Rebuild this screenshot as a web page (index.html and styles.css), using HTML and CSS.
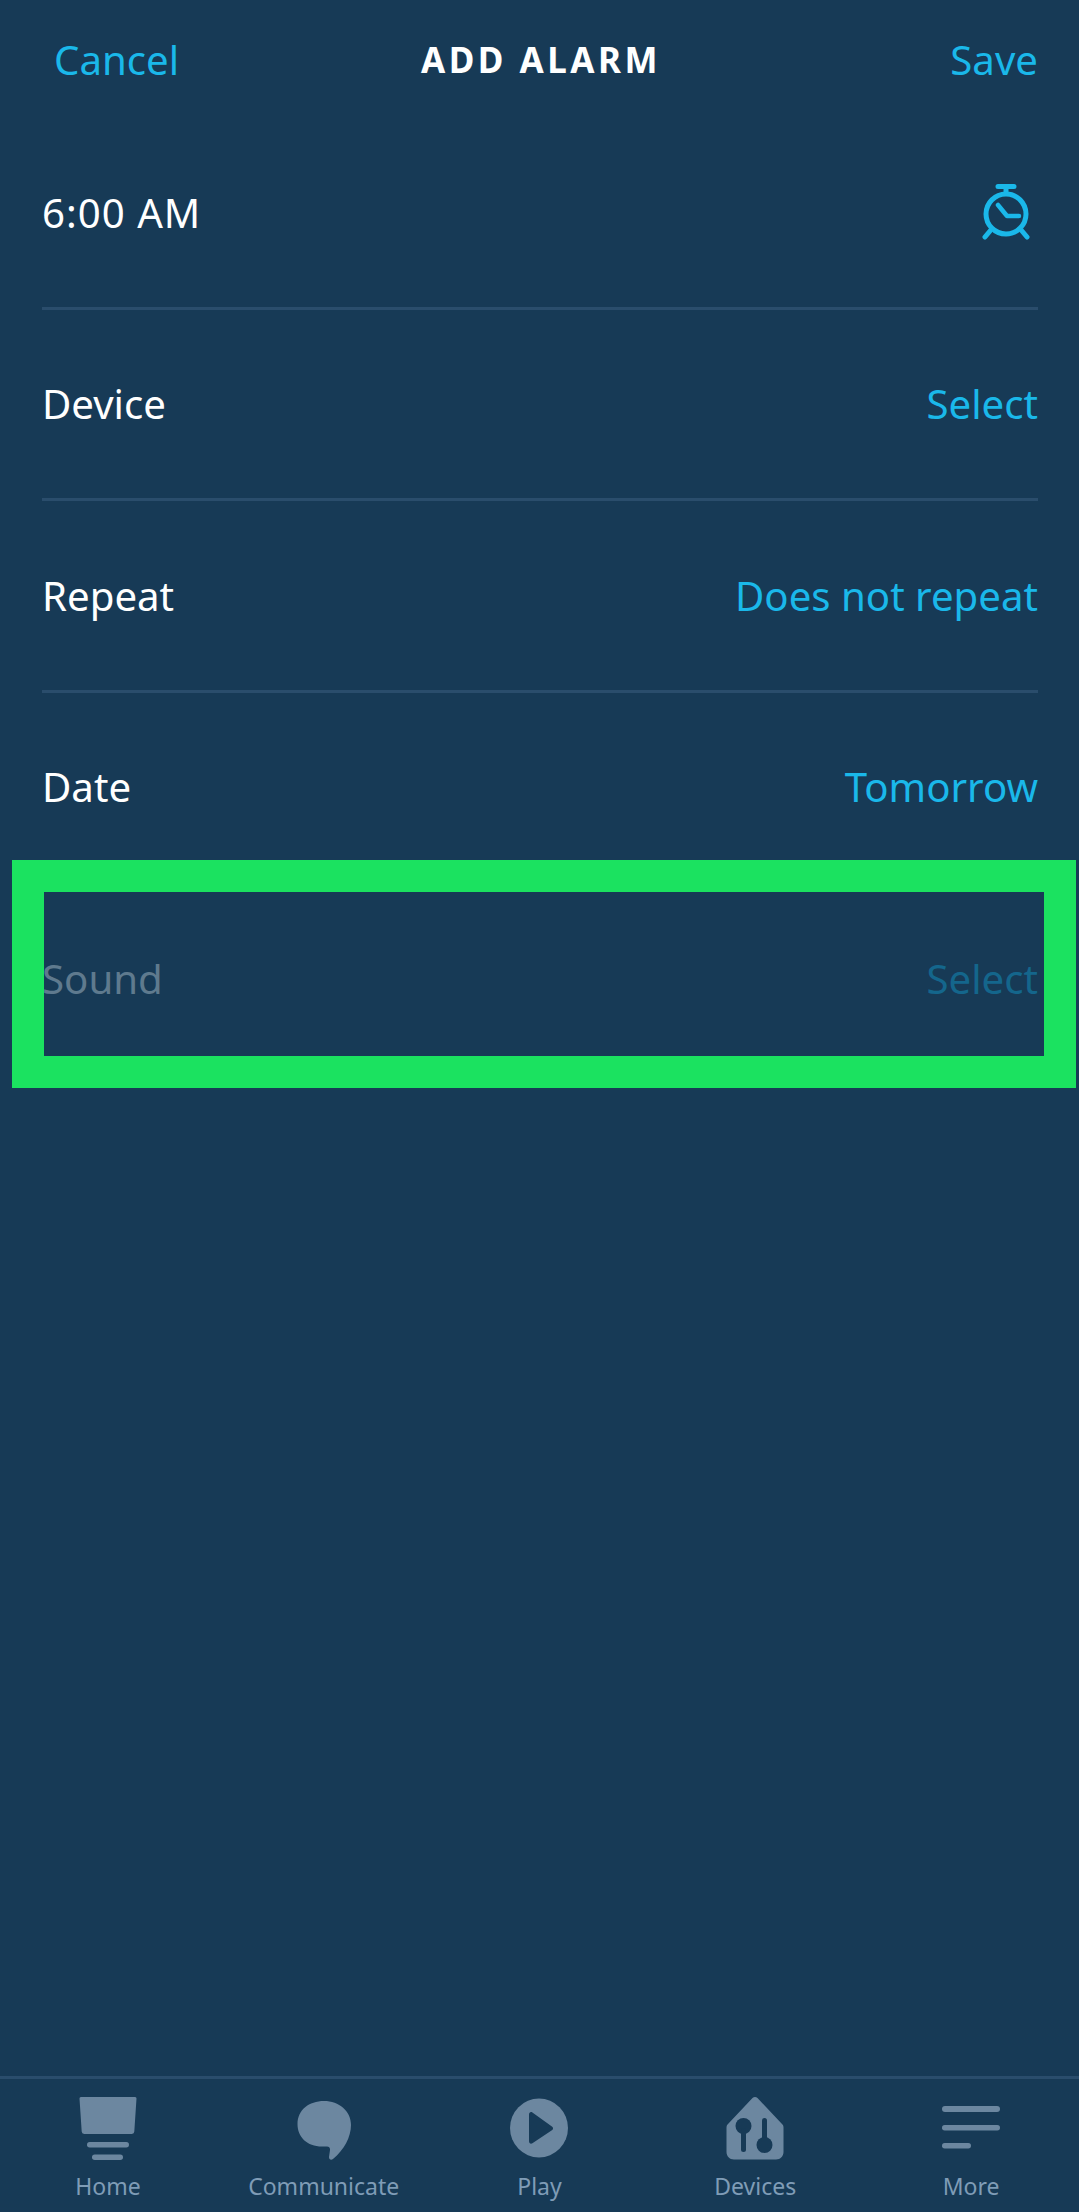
FILE: index.html
```html
<!DOCTYPE html>
<html lang="en">
<head>
  <meta charset="UTF-8">
  <title>Add Alarm</title>
  <link rel="stylesheet" href="styles.css">
</head>
<body>

  <div class="header">
    <div class="link">Cancel</div>
    <h1>ADD ALARM</h1>
    <div class="link save">Save</div>
  </div>

  <div class="rows">
    <div class="row">
      <div class="label time">6:00 AM</div>
      <svg class="alarm-icon" width="50" height="58" viewBox="0 0 50 58">
        <circle cx="25" cy="31" r="20" fill="none" stroke="#1ab8ea" stroke-width="5"/>
        <path d="M17 3.500h16M25 3.500v6" fill="none" stroke="#1ab8ea" stroke-width="5" stroke-linecap="round"/>
        <path d="M17 22l9 11h12" fill="none" stroke="#1ab8ea" stroke-width="4.500" stroke-linecap="round" stroke-linejoin="round"/>
        <path d="M9 48l-5 6M41 48l5 6" fill="none" stroke="#1ab8ea" stroke-width="5" stroke-linecap="round"/>
      </svg>
    </div>
    <div class="row">
      <div class="label">Device</div>
      <div class="link">Select</div>
    </div>
    <div class="row">
      <div class="label">Repeat</div>
      <div class="link">Does not repeat</div>
    </div>
    <div class="row">
      <div class="label">Date</div>
      <div class="link">Tomorrow</div>
    </div>
    <div class="row disabled">
      <div class="label">Sound</div>
      <div class="link">Select</div>
    </div>
  </div>

  <div class="highlight"></div>

  <div class="nav">
    <div class="nav-item">
      <svg width="60" height="64" viewBox="0 0 60 64">
        <path d="M3 1h54a1.500 1.500 0 0 1 1.500 1.600l-2.200 33a2.500 2.500 0 0 1-2.500 2.400H6.200a2.500 2.500 0 0 1-2.500-2.400L1.500 2.600A1.500 1.500 0 0 1 3 1z" fill="#6c87a0"/>
        <rect x="9" y="46" width="42" height="5.500" rx="2.700" fill="#6c87a0"/>
        <rect x="14" y="58.500" width="31" height="5.500" rx="2.700" fill="#6c87a0"/>
      </svg>
      <span>Home</span>
    </div>
    <div class="nav-item">
      <svg width="60" height="64" viewBox="0 0 60 64">
        <path d="M30 5c15 0 27 10 27 24 0 12-7 25-18 34-2 1.500-4 .5-4-2l1-7c.3-2-1-3.500-3-3.500H28C13 50.500 3.500 41 3.500 28 3.500 14 15 5 30 5z" fill="#6c87a0"/>
      </svg>
      <span>Communicate</span>
    </div>
    <div class="nav-item">
      <svg width="60" height="64" viewBox="0 0 60 64">
        <ellipse cx="30" cy="32" rx="29" ry="29.500" fill="#6c87a0"/>
        <path d="M20 18.500c0-2 1.700-3 3.400-2l19.500 14c1.500 1 1.500 2.800 0 3.800l-19.500 13c-1.700 1-3.400 0-3.400-2z" fill="#173a56"/>
      </svg>
      <span>Play</span>
    </div>
    <div class="nav-item">
      <svg width="60" height="64" viewBox="0 0 60 64">
        <path d="M27.500 2c1.400-1.500 3.600-1.500 5 0l24.500 26c1 1 1.500 2 1.500 3.500V56c0 4-3 7.500-7.500 7.500H9c-4.500 0-7.500-3.500-7.500-7.500V31.500c0-1.500.5-2.500 1.500-3.500z" fill="#6c87a0"/>
        <ellipse cx="18.500" cy="30" rx="8" ry="8" fill="#173a56"/>
        <rect x="16" y="32" width="5" height="24" rx="2.500" fill="#173a56"/>
        <rect x="37" y="22" width="5" height="26" rx="2.500" fill="#173a56"/>
        <ellipse cx="39.500" cy="49" rx="8" ry="8" fill="#173a56"/>
      </svg>
      <span>Devices</span>
    </div>
    <div class="nav-item">
      <svg width="60" height="64" viewBox="0 0 60 64">
        <rect x="1" y="10" width="58" height="6" rx="3" fill="#6c87a0"/>
        <rect x="1" y="29" width="58" height="5.500" rx="2.700" fill="#6c87a0"/>
        <rect x="1" y="47" width="29" height="5.500" rx="2.700" fill="#6c87a0"/>
      </svg>
      <span>More</span>
    </div>
  </div>

</body>
</html>
```

FILE: styles.css
```css
html, body {
  height: 100%;
}
body {
  font-family: "Noto Sans", sans-serif;
  background: #173a56;
  color: white;
  margin: 0;
  display: flex;
  flex-direction: column;
  position: relative;
}
.header {
  display: grid;
  grid-template-columns: 1fr auto 1fr;
  align-items: center;
  height: 118px;
  padding: 0 41px 0 54px;
}
.header h1 {
  margin: 0 0 0 -10px;
  font-size: 35px;
  font-weight: 700;
  letter-spacing: 3.500px;
}
.save {
  text-align: right;
}
.link {
  color: #1ab8ea;
  font-size: 40.200px;
}
.label {
  font-size: 40.200px;
}
.time {
  letter-spacing: 1px;
}
.rows {
  flex: 1;
  padding: 0 41px 0 42px;
}
.row {
  display: flex;
  justify-content: space-between;
  align-items: center;
  height: 188.500px;
  border-bottom: 3px solid #2a4d6c;
}
.row:last-child {
  border-bottom: none;
}
.alarm-icon {
  margin-right: 7px;
}
.disabled .label {
  color: #5f7a8e;
}
.disabled .link {
  color: #14668c;
}
.highlight {
  position: absolute;
  left: 12px;
  top: 860px;
  width: 1000px;
  height: 164px;
  border: 32px solid #1be260;
}
.nav {
  display: flex;
  border-top: 3px solid #2a4d6c;
  height: 136px;
  box-sizing: border-box;
  padding-top: 17px;
}
.nav-item {
  flex: 1;
  display: flex;
  flex-direction: column;
  align-items: center;
  color: #7f9cb6;
  font-size: 23px;
}
.nav-item svg {
  margin-bottom: 10px;
}
```
